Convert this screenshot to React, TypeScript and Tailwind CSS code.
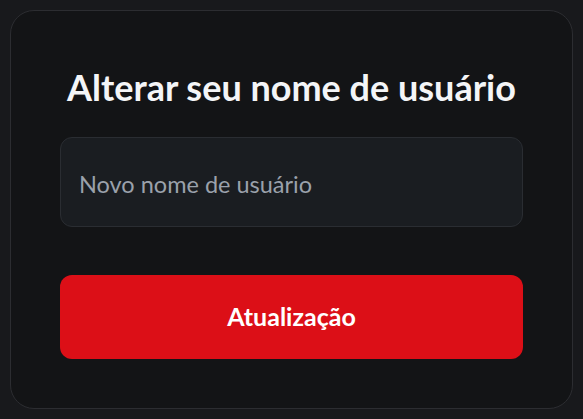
export default function App() {
  return (
    <div className="w-[583px] h-[419px] bg-[#18191c] p-[10px]" style={{ fontFamily: 'Lato, "Noto Sans", sans-serif' }}>
      <div className="w-[563px] h-[399px] rounded-[24px] border border-[#2c2d31] bg-[#131416] px-[49px] pt-[54px]">
        <h1 className="text-center text-[36px] leading-[44px] font-bold text-[#f4f5f7]">Alterar seu nome de usuário</h1>
        <div className="mt-[28px] h-[90px] rounded-[12px] border border-[#2a2d32] bg-[#1a1d21] flex items-center px-[18px] pt-[5px]">
          <span className="text-[23.5px] text-[#9aa1ab]">Novo nome de usuário</span>
        </div>
        <button className="mt-[48px] w-full h-[84px] rounded-[12px] bg-[#dc0f17] text-white text-[25px] font-bold">Atualização</button>
      </div>
    </div>
  );
}
